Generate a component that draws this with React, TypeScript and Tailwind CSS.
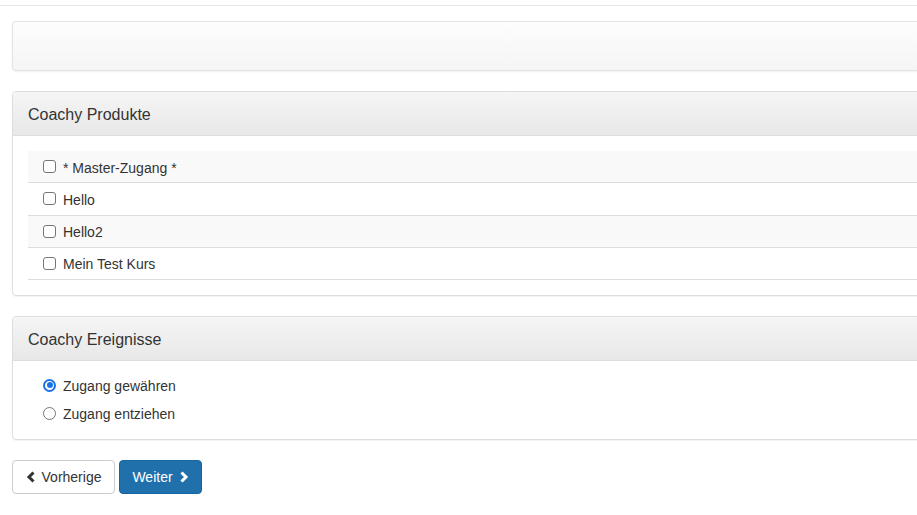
import React from "react";

const font = { fontFamily: '"Liberation Sans", Arial, Helvetica, sans-serif' };

function Checkbox() {
  return (
    <span className="inline-block w-[13px] h-[13px] rounded-[3px] border border-[#767676] bg-white shrink-0" />
  );
}

function Radio({ checked }: { checked?: boolean }) {
  return checked ? (
    <span className="inline-flex items-center justify-center w-[13px] h-[13px] rounded-full border-2 border-[#1a73e8] bg-white shrink-0">
      <span className="w-[6px] h-[6px] rounded-full bg-[#1a73e8]" />
    </span>
  ) : (
    <span className="inline-block w-[13px] h-[13px] rounded-full border border-[#767676] bg-white shrink-0" />
  );
}

export default function App() {
  const rows = ["* Master-Zugang *", "Hello", "Hello2", "Mein Test Kurs"];
  return (
    <div className="w-[917px] h-[515px] overflow-hidden bg-white text-[#333]" style={font}>
      <div className="h-[6px] border-b border-[#e5e5e5]" />
      <div className="w-[1200px] pl-[12px] pt-[15px]">
        <div className="h-[50px] rounded-[4px] border border-[#e3e3e3] bg-gradient-to-b from-[#fdfdfd] to-[#f5f5f5] shadow-[0_1px_2px_rgba(0,0,0,0.06)]" />

        <div className="mt-[20px] rounded-[4px] border border-[#dddddd] shadow-[0_1px_1px_rgba(0,0,0,0.05)]">
          <div className="h-[44px] flex items-center pl-[15px] border-b border-[#dddddd] bg-gradient-to-b from-[#f5f5f5] to-[#e8e8e8] rounded-t-[3px] text-[16px]">
            <span className="pt-[2px]">Coachy Produkte</span>
          </div>
          <div className="px-[15px] pt-[15px] pb-[15px]">
            <div className="text-[14px]">
              {rows.map((r, i) => (
                <div
                  key={r}
                  className={`h-[32.25px] flex items-center gap-[7px] pl-[15px] border-b border-[#dddddd] ${i % 2 === 0 ? "bg-[#f9f9f9]" : "bg-white"}`}
                >
                  <Checkbox />
                  <span className="pt-[3px]">{r}</span>
                </div>
              ))}
            </div>
          </div>
        </div>

        <div className="mt-[20px] rounded-[4px] border border-[#dddddd] shadow-[0_1px_1px_rgba(0,0,0,0.05)]">
          <div className="h-[44px] flex items-center pl-[15px] border-b border-[#dddddd] bg-gradient-to-b from-[#f5f5f5] to-[#e8e8e8] rounded-t-[3px] text-[16px]">
            <span className="pt-[2px]">Coachy Ereignisse</span>
          </div>
          <div className="pt-[14px] pb-[16px] pl-[30px] text-[14px] flex flex-col gap-[8px]">
            <div className="h-[20px] flex items-center gap-[7px]">
              <Radio checked />
              <span className="pt-[3px]">Zugang gewähren</span>
            </div>
            <div className="h-[20px] flex items-center gap-[7px]">
              <Radio />
              <span className="pt-[3px]">Zugang entziehen</span>
            </div>
          </div>
        </div>

        <div className="mt-[20px] flex gap-[4px]">
          <button className="h-[34px] w-[103px] flex items-center justify-center gap-[6px] rounded-[4px] border border-[#cccccc] bg-white text-[14px] text-[#333]">
            <svg width="10" height="12" viewBox="0 0 10 12">
              <path d="M7.5 1.5 L3 6 L7.5 10.5" stroke="#333" strokeWidth="3" fill="none" strokeLinejoin="miter" />
            </svg>
            Vorherige
          </button>
          <button className="h-[34px] w-[83px] flex items-center justify-center gap-[6px] rounded-[4px] border border-[#17659f] bg-[#1f70ab] text-[14px] text-white">
            Weiter
            <svg width="10" height="12" viewBox="0 0 10 12">
              <path d="M2.5 1.5 L7 6 L2.5 10.5" stroke="#fff" strokeWidth="3" fill="none" strokeLinejoin="miter" />
            </svg>
          </button>
        </div>
      </div>
    </div>
  );
}
